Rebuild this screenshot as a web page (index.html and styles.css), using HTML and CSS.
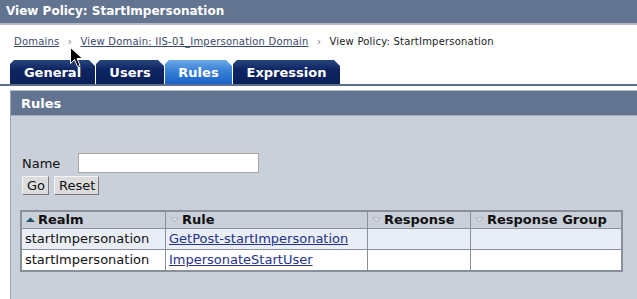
FILE: index.html
```html
<html>
    <head>
        <title>View Policy</title>
        <link rel="stylesheet" href="styles.css">
    </head>
    <body>
        <div class="titulo">View Policy: StartImpersonation</div>
        <div class="migas">
            <a href="#">Domains</a>
            <span class="sep">&rsaquo;</span>
            <a href="#">View Domain: IIS-01_Impersonation Domain</a>
            <span class="sep">&rsaquo;</span>
            <span>View Policy: StartImpersonation</span>
        </div>
        <div class="pestanas">
            <div class="pestana ancho-general">General</div>
            <div class="pestana ancho-users">Users</div>
            <div class="pestana activa ancho-rules">Rules</div>
            <div class="pestana ancho-expr">Expression</div>
        </div>
        <div class="panel">
            <div class="panel-cabecera">Rules</div>
            <div class="panel-cuerpo">
                <form class="filtro">
                    <div class="fila-nombre">
                        <label for="nombre">Name</label>
                        <input type="text" id="nombre" name="nombre">
                    </div>
                    <div class="botones">
                        <button type="button" class="boton">Go</button>
                        <button type="button" class="boton">Reset</button>
                    </div>
                </form>
                <table class="tabla">
                    <tr class="cabecera">
                        <th class="col-realm"><svg class="flecha" width="9" height="6" viewBox="0 0 9 6"><polygon points="0,5 4.5,0.5 9,5" fill="#1c4f6a"/></svg>Realm</th>
                        <th class="col-rule"><svg class="flecha" width="9" height="6" viewBox="0 0 9 6"><polygon points="0,0.5 9,0.5 4.5,5.5" fill="#a9aeb8"/><polygon points="1.5,1.2 7.5,1.2 4.5,4.3" fill="#dde1e8"/></svg>Rule</th>
                        <th class="col-resp"><svg class="flecha" width="9" height="6" viewBox="0 0 9 6"><polygon points="0,0.5 9,0.5 4.5,5.5" fill="#a9aeb8"/><polygon points="1.5,1.2 7.5,1.2 4.5,4.3" fill="#dde1e8"/></svg>Response</th>
                        <th class="col-grupo"><svg class="flecha" width="9" height="6" viewBox="0 0 9 6"><polygon points="0,0.5 9,0.5 4.5,5.5" fill="#a9aeb8"/><polygon points="1.5,1.2 7.5,1.2 4.5,4.3" fill="#dde1e8"/></svg>Response Group</th>
                    </tr>
                    <tr class="impar">
                        <td>startImpersonation</td>
                        <td><a href="#">GetPost-startImpersonation</a></td>
                        <td></td>
                        <td></td>
                    </tr>
                    <tr>
                        <td>startImpersonation</td>
                        <td><a href="#">ImpersonateStartUser</a></td>
                        <td></td>
                        <td></td>
                    </tr>
                </table>
            </div>
        </div>
        <svg class="cursor" width="13" height="21" viewBox="0 0 13 21">
            <polygon points="0.5,0.5 0.5,16.5 4.5,12.5 7.5,19.5 10,18.5 7,11.5 12.5,11.5" fill="#000" stroke="#fff" stroke-width="1"/>
        </svg>
    </body>
</html>
```

FILE: styles.css
```css
html{
    background-color: #ffffff;
}
body{
    margin: 0;
    font-family: "DejaVu Sans", Verdana, sans-serif;
    font-size: 13px;
    color: #111111;
    position: relative;
    overflow: hidden;
}
.titulo{
    height: 23px;
    line-height: 23px;
    padding-left: 6px;
    background-color: #62748f;
    color: #ffffff;
    font-weight: bold;
    font-size: 12px;
    border-bottom: 2px solid #b3bac6;
}
.migas{
    margin-top: 10px;
    padding-left: 14px;
    font-size: 10px;
    letter-spacing: 0.2px;
    height: 14px;
    line-height: 14px;
    color: #222222;
}
.migas a{
    color: #3b4a6b;
}
.migas .sep{
    color: #777777;
    margin: 0 5px;
}
.pestanas{
    display: flex;
    gap: 1px;
    margin-top: 11px;
    padding-left: 10px;
    border-bottom: 2px solid #5d6d8c;
    height: 24px;
}
.pestana{
    height: 24px;
    line-height: 25px;
    text-align: center;
    color: #ffffff;
    font-weight: bold;
    font-size: 13px;
    background: linear-gradient(#28467f, #0e2562 40%, #0b1f58);
    clip-path: polygon(0 4px, 4px 0, calc(100% - 6px) 0, 100% 6px, 100% 100%, 0 100%);
}
.pestana.activa{
    background: linear-gradient(#6aa7e6, #3a82d6 45%, #1a62c8);
}
.ancho-general{ width: 85px; }
.ancho-users{ width: 68px; }
.ancho-rules{ width: 67px; }
.ancho-expr{ width: 107px; }
.panel{
    margin-top: 4px;
    margin-left: 10px;
    border-top: 1px solid #b5bdc9;
    border-left: 1px solid #9aa3b3;
}
.panel-cabecera{
    height: 24px;
    line-height: 26px;
    padding-left: 10px;
    background-color: #62748f;
    color: #ffffff;
    font-weight: bold;
    font-size: 13px;
    border-bottom: 1px solid #a3adbd;
}
.panel-cuerpo{
    background-color: #c9d0da;
    padding: 37px 0 40px 11px;
}
.filtro{
    margin: 0;
}
.fila-nombre{
    display: flex;
    align-items: center;
    height: 20px;
}
.fila-nombre label{
    width: 56px;
    font-size: 13px;
}
.fila-nombre input{
    width: 181px;
    height: 20px;
    box-sizing: border-box;
    border: 1px solid #a6a6a6;
    background-color: #ffffff;
}
.botones{
    display: flex;
    gap: 5px;
    margin-top: 3px;
}
.boton{
    height: 19px;
    padding: 0 3px 0 4px;
    font-family: "DejaVu Sans", Verdana, sans-serif;
    font-size: 13px;
    color: #111111;
    background-color: #dcdcdc;
    border: 1px solid;
    border-color: #f4f4f4 #7a7a7a #7a7a7a #f4f4f4;
    line-height: 16px;
}
.tabla{
    margin-top: 15px;
    margin-left: -2px;
    border-collapse: collapse;
    border: 2px solid #8a9099;
    width: 603px;
    font-size: 13px;
}
.tabla th, .tabla td{
    border: 1px solid #8a9099;
    text-align: left;
    padding: 0 3px;
    white-space: nowrap;
}
.tabla th{
    height: 16px;
    line-height: 16px;
    font-weight: bold;
}
.tabla td{
    height: 20px;
    line-height: 20px;
    background-color: #ffffff;
}
.tabla tr.impar td{
    background-color: #e9eef6;
}
.tabla a{
    color: #26318a;
}
.flecha{
    margin: 0 3px 2px 1px;
    vertical-align: middle;
}
.col-realm{ width: 137px; }
.col-rule{ width: 195px; }
.col-resp{ width: 96px; }
.cursor{
    position: absolute;
    left: 70px;
    top: 47px;
}
```
